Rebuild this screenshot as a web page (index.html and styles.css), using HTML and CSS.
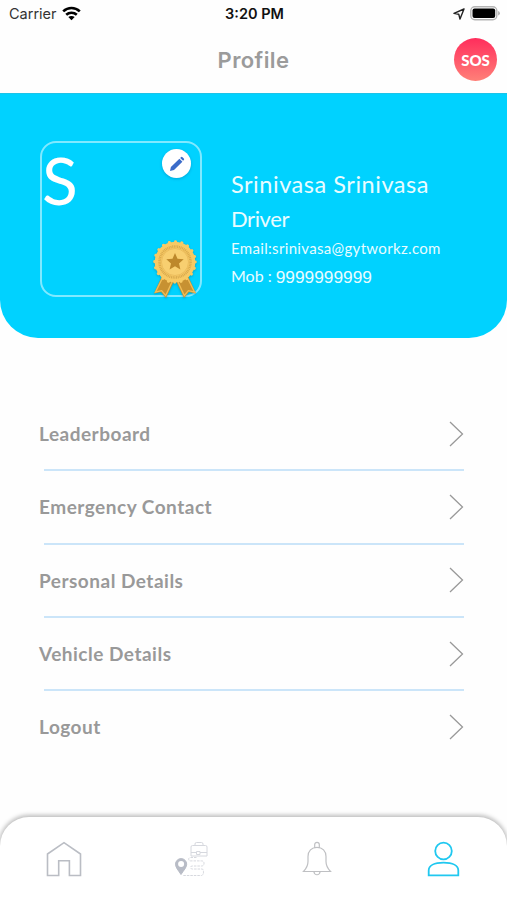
FILE: index.html
```html
<!DOCTYPE html>
<html lang="en">
<head>
<meta charset="utf-8">
<title>Profile</title>
<link rel="stylesheet" href="styles.css">
</head>
<body>
<div class="screen">
  <div class="status">
    <div class="carrier"><span>Carrier</span>
      <svg width="19" height="15" viewBox="0 0 19 15" fill="none" stroke="#000" stroke-width="2.6"><path d="M1.2 5.400C6 .9 13 .9 17.800 5.400M4.200 8.800c3-2.800 7.600-2.800 10.600 0"/><path d="M9.500 14.300 6.300 11.100c1.900-1.500 4.500-1.500 6.400 0z" fill="#000" stroke="none"/></svg>
    </div>
    <span class="time">3:20 PM</span>
    <div class="power">
      <svg width="12" height="12" viewBox="0 0 12 12" fill="none" stroke="#222" stroke-width="1.400" stroke-linejoin="round"><path d="M11 1 1 5.400l4.800.9L7 11z"/></svg>
      <svg width="30" height="15" viewBox="0 0 30 15"><rect x=".8" y=".8" width="26" height="13" rx="4" fill="#fff" stroke="#b4b4b4" stroke-width="1.400"/><rect x="2.500" y="2.500" width="22.700" height="9.600" rx="2" fill="#000"/><path d="M28.200 5v4.600q1.600-.6 1.600-2.300T28.200 5" fill="#aaa"/></svg>
    </div>
  </div>
  <header class="header"><span></span><h1>Profile</h1><button class="sos">SOS</button></header>
  <section class="hero">
    <div class="avatar">
      <span class="initial">S</span>
      <span class="edit"><svg width="16" height="16" viewBox="0 0 16 16" fill="#3b6cc9"><path d="M1 15l.9-3.900L10.400 2.700l3 3L5 14.100zM11.200 1.900l.7-.7q.8-.7 1.600 0l1.300 1.300q.8.800 0 1.600l-.7.7z"/></svg></span>
      <svg class="medal" width="46" height="62" viewBox="0 0 46 62">
        <path d="M10 38 2 55.500l7-1.500 5 6 9-19 9 19 5-6 7 1.500L36 38z" fill="#c79132"/>
        <path d="m10 41-6.500 13 6.200-1.400 4 5 7-15M36 41l6.500 13-6.200-1.400-4 5-7-15" fill="none" stroke="#efbd59" stroke-width="1.300"/>
        <circle cx="23" cy="24" r="20.300" fill="#f7ca65"/>
        <circle cx="23" cy="24" r="20.300" fill="none" stroke="#f7ca65" stroke-width="3" stroke-linecap="round" stroke-dasharray=".1 6.273"/>
        <circle cx="23" cy="24" r="15.500" fill="none" stroke="#d9aa4e" stroke-width="2.600" stroke-dasharray="1 .7"/>
        <circle cx="23" cy="24" r="13.500" fill="#f8cf70" stroke="#e7b657" stroke-width=".7"/>
        <path d="m23 15 2.500 5.700 6.200.6-4.700 4.100 1.400 6.100-5.400-3.200-5.400 3.200 1.400-6.100-4.700-4.100 6.200-.6z" fill="#bd882b"/>
      </svg>
    </div>
    <div class="info">
      <div class="name">Srinivasa Srinivasa</div>
      <div class="role">Driver</div>
      <div class="email">Email:srinivasa@gytworkz.com</div>
      <div class="mobile"><span>Mob :</span><span class="number">9999999999</span></div>
    </div>
  </section>
  <main class="menu">
    <div class="row"><span>Leaderboard</span><svg class="chevron" viewBox="0 0 15 26"><path d="m1 1 12.500 12L1 25"/></svg></div>
    <div class="row"><span>Emergency Contact</span><svg class="chevron" viewBox="0 0 15 26"><path d="m1 1 12.500 12L1 25"/></svg></div>
    <div class="row"><span>Personal Details</span><svg class="chevron" viewBox="0 0 15 26"><path d="m1 1 12.500 12L1 25"/></svg></div>
    <div class="row"><span>Vehicle Details</span><svg class="chevron" viewBox="0 0 15 26"><path d="m1 1 12.500 12L1 25"/></svg></div>
    <div class="row"><span>Logout</span><svg class="chevron" viewBox="0 0 15 26"><path d="m1 1 12.500 12L1 25"/></svg></div>
  </main>
  <nav class="tabs">
    <svg width="36" height="36" viewBox="0 0 36 36" fill="none" stroke="#babdc4" stroke-width="1.600"><path d="M1.500 34.500V13L18 1.600 34.500 13v21.500H23.400V19.700H12.700v14.800z"/></svg>
    <svg width="36" height="36" viewBox="-1.500 0 36 36" fill="none" stroke="#d6d8de" stroke-width="1"><path d="M19 4.500h13q1.500 0 1.500 1.500v9H17.500V6q0-1.500 1.500-1.500M21.500 4.500V3q0-1.500 1.500-1.500h5q1.500 0 1.500 1.500v1.500M17.500 11.500h5m4 0h7M23 10.500h3.500v3H23z"/><path stroke-dasharray="2.500 1" d="M23 16.500h-6q-1.800 0-1.800 1.700t1.800 1.700h11q2.500 0 2.500 2.500T28 25H19q-2 0-2 1.500t2 1.500h9.500q1.500 0 1.500 3t-2 3.500H9"/><path d="M7.500 33.500C5 29.500 2 26.500 2 23.200a5.600 5.600 0 0 1 11.200 0c0 3.300-3.200 6.300-5.700 10.300z" fill="#b8bcc6" stroke="#b8bcc6"/><circle cx="7.600" cy="23" r="3" fill="#fff" stroke="none"/></svg>
    <svg width="36" height="36" viewBox="0 0 36 36" fill="none" stroke="#bfc0c3" stroke-width="1.200"><path d="M4.500 30.500h27c-3-3.200-4.500-5.500-4.500-10v-5C27 10 23.500 6.300 18 6.300S9 10 9 15.500v5c0 4.500-1.500 6.800-4.500 10zM15.700 6.500V3.600a2.300 2.300 0 0 1 4.600 0v2.900M14.800 30.500a3.300 4.300 0 0 0 6.400 0"/></svg>
    <svg width="36" height="36" viewBox="-.5 0 36 36" fill="none" stroke="#20c8f0" stroke-width="1.800"><circle cx="18" cy="10" r="8.300"/><path d="M3.200 34.300v-4.800c0-4.800 5.500-7.800 14.800-7.800s14.800 3 14.800 7.800v4.800z"/></svg>
  </nav>
</div>
</body>
</html>
```
FILE: styles.css
```css
* { box-sizing: border-box; }
body { margin: 0; background: #fefefe; font-family: Lato, "Liberation Sans", sans-serif; }
svg { display: block; flex: none; }
.screen { width: 507px; height: 900px; display: flex; flex-direction: column; overflow: hidden; }
.status { height: 27px; padding: 0 7px 0 9px; display: grid; grid-template-columns: 1fr auto 1fr; align-items: center; font-family: Inter, sans-serif; font-size: 14.500px; color: #333; }
.carrier, .power { display: flex; align-items: center; gap: 5px; }
.power { justify-content: flex-end; }
.time { font-weight: 600; color: #111; }
.header { height: 66px; padding: 0 10px; display: grid; grid-template-columns: 1fr auto 1fr; align-items: center; }
.header h1 { margin: 0; font: 600 22px/28px Inter, sans-serif; letter-spacing: .4px; color: #9b9b9b; }
.sos { justify-self: end; width: 43px; height: 43px; margin-bottom: 1px; padding: 0; border: 0; border-radius: 50%; background: linear-gradient(#ff2d5c, #ff8078); color: #fff; font: 900 15px Lato, sans-serif; }
.hero { height: 245px; flex: none; display: flex; gap: 29px; padding: 47px 0 0 40px; background: #00d2ff; border-radius: 0 0 38px 38px; border-top: 1px solid #1cc3e8; color: #e9fcff; }
.avatar { position: relative; width: 162px; height: 156px; border: 2px solid #80e9ff; border-radius: 16px; }
.initial { display: block; font-size: 66px; line-height: 74px; color: #fff; }
.edit { position: absolute; right: 9px; top: 6px; width: 29px; height: 29px; border-radius: 50%; background: #fff; display: grid; place-items: center; box-shadow: 0 1px 3px #0068a066; }
.medal { position: absolute; right: 2px; bottom: -5px; filter: drop-shadow(0 1px 1px #00507055); }
.info { padding-top: 26px; white-space: nowrap; }
.name { font-size: 23.500px; line-height: 35px; letter-spacing: .54px; }
.role { font-size: 22px; line-height: 34px; letter-spacing: -.4px; }
.email { font-size: 15px; line-height: 24px; letter-spacing: .33px; }
.mobile { display: flex; gap: 4px; font-size: 16px; line-height: 31px; }
.number { padding-top: 2px; font: 17.300px/31px "Liberation Sans", sans-serif; }
.menu { flex: none; margin: 59px 43px 0 39px; }
.row { height: 73.300px; display: flex; align-items: center; justify-content: space-between; position: relative; color: #999; font-size: 19px; font-weight: 700; letter-spacing: .5px; }
.row:not(:last-child)::after { content: ""; position: absolute; left: 5px; right: 0; bottom: -1px; height: 2px; background: #cbe5f9; }
.chevron { width: 15px; height: 26px; fill: none; stroke: #999; stroke-width: 1.300; }
.tabs { height: 83px; flex: none; margin-top: auto; padding: 0 45.500px; display: flex; justify-content: space-between; align-items: center; background: #fff; border-radius: 29px 29px 0 0; box-shadow: 0 -1px 4px 1px #bbb; }
```
